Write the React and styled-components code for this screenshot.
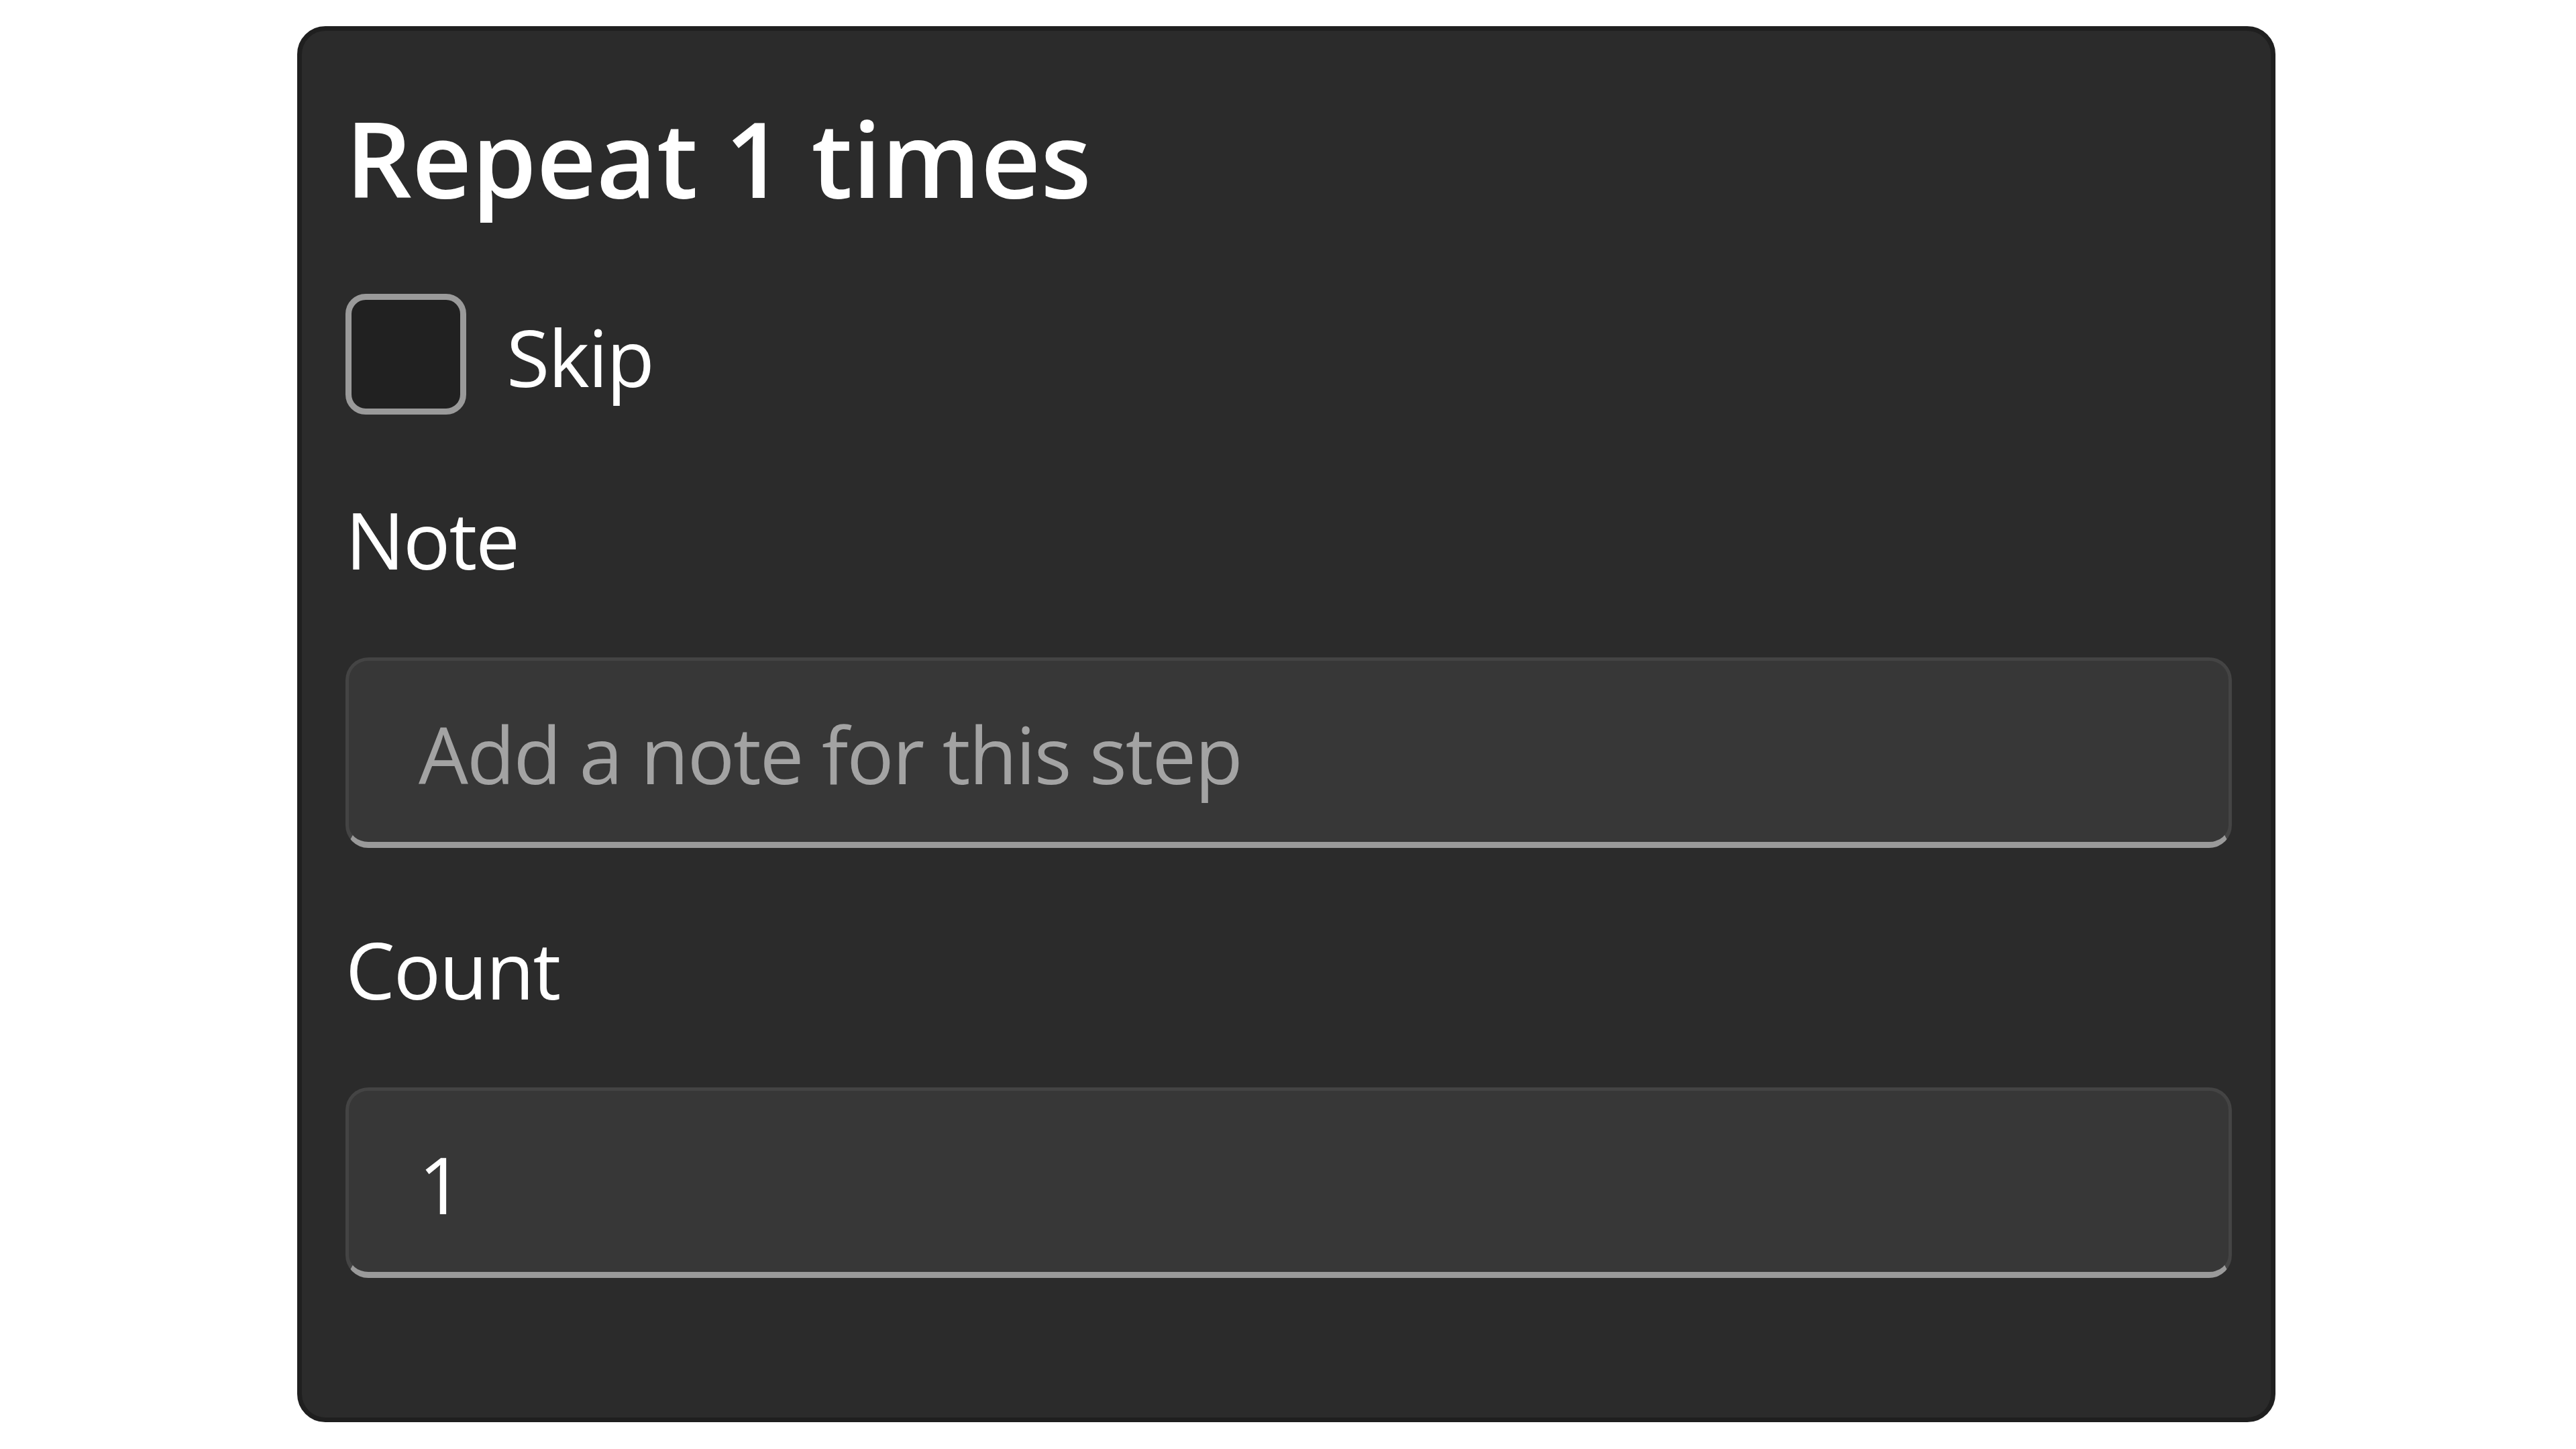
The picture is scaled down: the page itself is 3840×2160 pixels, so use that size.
import React from "react";
import styled, { createGlobalStyle } from "styled-components";

const Global = createGlobalStyle`
  html, body {
    margin: 0;
    padding: 0;
    background: #ffffff;
  }
  body {
    font-family: "Open Sans", "Noto Sans", sans-serif;
  }
  * { box-sizing: border-box; }
`;

const Page = styled.div`
  width: 3840px;
  height: 2160px;
  padding: 39px 0 0 443px;
`;

const Card = styled.section`
  width: 2949px;
  height: 2081px;
  background: #2b2b2b;
  border: 7px solid #1f1f1f;
  border-radius: 42px;
  padding: 84px 58px 0 65px;
  display: flex;
  flex-direction: column;
`;

const Title = styled.h2`
  margin: 0;
  height: 210px;
  line-height: 210px;
  font-size: 155px;
  font-weight: 600;
  color: #ffffff;
  letter-spacing: 0;
`;

const CheckRow = styled.label`
  margin-top: 98px;
  height: 180px;
  display: flex;
  align-items: center;
  gap: 60px;
  cursor: pointer;
`;

const Box = styled.span`
  width: 180px;
  height: 180px;
  flex: none;
  border-radius: 30px;
  border: 9px solid #9a9a9a;
  background: #212121;
`;

const CheckText = styled.span`
  font-size: 117px;
  line-height: 166px;
  letter-spacing: -2px;
  color: #ffffff;
  padding-top: 8px;
`;

const FieldLabel = styled.div`
  margin-top: ${(p) => p.$gap}px;
  height: 166px;
  line-height: 166px;
  font-size: 117px;
  letter-spacing: -2px;
  color: #ffffff;
`;

const TextInput = styled.input`
  margin-top: 93px;
  width: 100%;
  height: 284px;
  padding: 6px 40px 0 104px;
  background: #373737;
  border: 5px solid #444444;
  border-bottom: 9px solid #9a9a9a;
  border-radius: 34px;
  font-family: "Open Sans", "Noto Sans", sans-serif;
  font-size: 117px;
  letter-spacing: -2px;
  color: #ffffff;
  outline: none;
  &::placeholder {
    color: #a3a3a3;
    opacity: 1;
  }
`;

export default function App() {
  return (
    <>
      <Global />
      <Page>
        <Card>
          <Title>Repeat 1 times</Title>
          <CheckRow>
            <Box />
            <CheckText>Skip</CheckText>
          </CheckRow>
          <FieldLabel $gap={103}>Note</FieldLabel>
          <TextInput type="text" placeholder="Add a note for this step" />
          <FieldLabel $gap={98}>Count</FieldLabel>
          <TextInput type="text" defaultValue="1" />
        </Card>
      </Page>
    </>
  );
}
